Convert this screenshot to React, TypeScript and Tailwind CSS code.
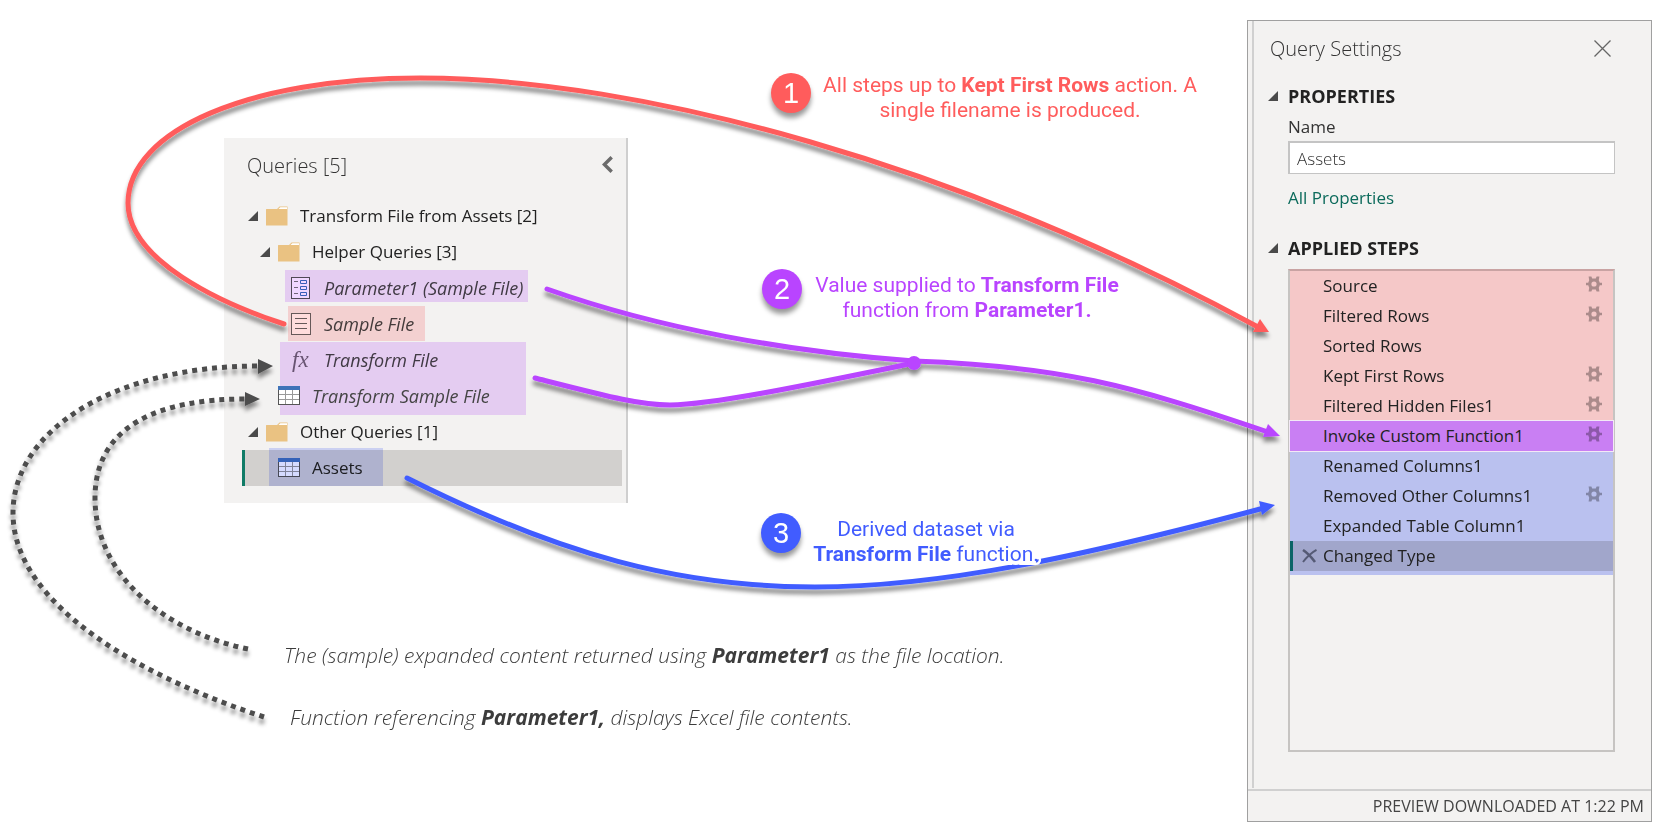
import React, { useState } from "react";
import clsx from "clsx";

type IconKind = "folder" | "parameter" | "text" | "fx" | "table";

interface QueryRow {
  label: string;
  level: number;
  icon: IconKind;
  group?: boolean;
  italic?: boolean;
  selected?: boolean;
  mark?: string;
}

const indents = ["pl-[3px]", "pl-[15px]", "pl-[27px]"];

const rows: QueryRow[] = [
  { label: "Transform File from Assets [2]", level: 0, icon: "folder", group: true },
  { label: "Helper Queries [3]", level: 1, icon: "folder", group: true },
  {
    label: "Parameter1 (Sample File)",
    level: 2,
    icon: "parameter",
    italic: true,
    mark: "left-[40px] top-0 h-8 w-[243px] bg-[#f0d7ff]",
  },
  {
    label: "Sample File",
    level: 2,
    icon: "text",
    italic: true,
    mark: "left-[43px] top-0 h-[35px] w-[137px] bg-[#ffdcdc]",
  },
  {
    label: "Transform File",
    level: 2,
    icon: "fx",
    italic: true,
    mark: "left-[35px] top-0 h-[73px] w-[246px] bg-[#f0d7ff]",
  },
  { label: "Transform Sample File", level: 1, icon: "table", italic: true },
  { label: "Other Queries [1]", level: 0, icon: "folder", group: true },
  {
    label: "Assets",
    level: 1,
    icon: "table",
    selected: true,
    mark: "left-[24px] -top-0.5 h-[38px] w-[114px] bg-[#d5dbff]",
  },
];

interface Step {
  label: string;
  gear?: boolean;
  tone: string;
  current?: boolean;
}

const pink = "bg-[#f5c8c8]";
const blue = "bg-[#bac1ef]";

const steps: Step[] = [
  { label: "Source", gear: true, tone: pink },
  { label: "Filtered Rows", gear: true, tone: pink },
  { label: "Sorted Rows", tone: pink },
  { label: "Kept First Rows", gear: true, tone: pink },
  { label: "Filtered Hidden Files1", gear: true, tone: pink },
  { label: "Invoke Custom Function1", gear: true, tone: "bg-[#c97ff3] outline outline-1 outline-[#f3e9f6] relative" },
  { label: "Renamed Columns1", tone: blue },
  { label: "Removed Other Columns1", gear: true, tone: blue },
  { label: "Expanded Table Column1", tone: blue },
  { label: "Changed Type", current: true, tone: "bg-[#a1a6cb]" },
];

function Triangle() {
  return (
    <svg width="10" height="10" viewBox="0 0 10 10" aria-hidden="true">
      <path d="M10 0V10H0Z" fill="#4a4a4a" />
    </svg>
  );
}

function Icon({ kind }: { kind: IconKind }) {
  if (kind === "folder") {
    return (
      <svg width="22" height="20" viewBox="0 0 22 20" aria-hidden="true">
        <path d="M0 3.5Q0 3 .5 3H11L13.5 .5H21.5V19.5H0Z" fill="#eac282" />
        <path d="M12.5 3L14.3 1.3H21V3Z" fill="#fff" />
      </svg>
    );
  }
  if (kind === "parameter") {
    return (
      <svg width="22" height="22" viewBox="0 0 22 22" fill="none" aria-hidden="true">
        <rect x="1.5" y=".5" width="18" height="21" fill="#fff" stroke="#555" />
        <path d="M4 4.5H8M4 10.5H8M4 16.5H8" stroke="#777" />
        <path d="M10.5 3.5H16.5V6.5H10.5ZM10.5 9.5H16.5V12.5H10.5ZM10.5 15.5H16.5V18.5H10.5Z" stroke="#3b6fb8" />
      </svg>
    );
  }
  if (kind === "text") {
    return (
      <svg width="22" height="22" viewBox="0 0 22 22" fill="none" aria-hidden="true">
        <rect x="1.5" y=".5" width="19" height="21" fill="#fff" stroke="#666" />
        <path d="M5 5.5H17M5 10.5H17M5 15.5H17" stroke="#666" />
      </svg>
    );
  }
  if (kind === "fx") {
    return (
      <span
        aria-hidden="true"
        className="w-[22px] pl-0.5 font-['Liberation_Serif',serif] text-[23px] leading-6 text-[#6e6472] italic"
      >
        fx
      </span>
    );
  }
  return (
    <svg width="22" height="20" viewBox="0 0 22 20" fill="none" aria-hidden="true">
      <rect x=".5" y="1.5" width="21" height="17" fill="#fff" stroke="#555" />
      <path d="M7.5 4V18M14.5 4V18M1 8.5H21M1 13.5H21" stroke="#999" />
      <path d="M0 0H22V4H0Z" fill="#3f72b8" />
    </svg>
  );
}

function Gear() {
  return (
    <svg width="16" height="16" viewBox="0 0 16 16" fill="currentColor" aria-hidden="true">
      <path
        fillRule="evenodd"
        d="M2.6 .6H5.4L6.2 2.6H9.8L10.6 .6H13.4L12.8 4.2L13.8 6.8H16V9.2H13.8L12.8 11.8L13.4 15.4H10.6L9.8 13.4H6.2L5.4 15.4H2.6L3.2 11.8L2.2 9.2H0V6.8H2.2L3.2 4.2ZM8 5.4A2.6 2.6 0 1 0 8 10.6A2.6 2.6 0 1 0 8 5.4Z"
      />
    </svg>
  );
}

function QueriesPanel() {
  return (
    <nav aria-label="Queries" className="mt-[138px] ml-[224px] w-[404px] shrink-0 self-start border-r-2 border-[#cfcfcf] bg-[#f3f2f1] pb-[17px]">
      <header className="flex h-[60px] items-start justify-between pt-[14px] pr-[13px] pl-[23px]">
        <h2 className="text-xl leading-7 font-light text-[#333]">Queries [5]</h2>
        <button type="button" aria-label="Collapse queries" className="pt-1">
          <svg width="11" height="17" viewBox="0 0 11 17" fill="none" aria-hidden="true">
            <path d="M9.7 1.2L2.4 8.5L9.7 15.8" stroke="#6b6b6b" strokeWidth="3.4" />
          </svg>
        </button>
      </header>
      <ul className="pr-1 pl-[18px]">
        {rows.map((row) => (
          <li
            key={row.label}
            className={clsx(
              "relative flex h-9 items-center border-l-[3px]",
              indents[row.level],
              row.selected ? "border-[#0f7b66] bg-[#d2d0ce]" : "border-transparent",
            )}
          >
            <span className="mr-2 w-2.5">{row.group && <Triangle />}</span>
            <Icon kind={row.icon} />
            <span
              className={clsx(
                "ml-3 whitespace-nowrap",
                row.italic ? "text-lg leading-6 text-[#444] italic" : "text-[17px] leading-6 text-[#222]",
              )}
            >
              {row.label}
            </span>
            {row.mark && <span aria-hidden="true" className={clsx("absolute mix-blend-multiply", row.mark)} />}
          </li>
        ))}
      </ul>
    </nav>
  );
}

function Callout({
  number,
  tone,
  badge,
  className,
  children,
}: {
  number: number;
  tone: string;
  badge: string;
  className: string;
  children: React.ReactNode;
}) {
  return (
    <div className={clsx("flex items-start whitespace-nowrap", className, tone)}>
      <span
        className={clsx(
          "flex size-10 shrink-0 items-center justify-center rounded-full font-['Liberation_Sans',sans-serif] text-[29px] leading-none text-white shadow-[0_5px_5px_rgba(0,0,0,0.4)]",
          badge,
        )}
      >
        {number}
      </span>
      {children}
    </div>
  );
}

function QuerySettings() {
  const [name, setName] = useState("Assets");
  return (
    <aside className="mt-5 mr-[9px] w-[405px] shrink-0 self-start border border-[#a0a0a0] bg-[#f3f2f1]">
      <div className="mb-px ml-1 border-l-2 border-[#d0d0d0] pr-9 pb-9 pl-[14px]">
        <header className="flex items-start justify-between pt-[14px] pr-1">
          <h2 className="pl-0.5 text-xl leading-7 font-light text-[#333]">Query Settings</h2>
          <button type="button" aria-label="Close" className="pt-[5px]">
            <svg width="17" height="17" viewBox="0 0 17 17" stroke="#666" strokeWidth="1.3" aria-hidden="true">
              <path d="M.5 .5L16.5 16.5M16.5 .5L.5 16.5" />
            </svg>
          </button>
        </header>
        <section>
          <h3 className="mt-[21px] flex items-center text-lg leading-6 font-bold text-[#222]">
            <span className="w-5"><Triangle /></span>
            PROPERTIES
          </h3>
          <div className="flex flex-col items-start pl-5">
            <label htmlFor="query-name" className="mt-[7px] text-[17px] leading-6 text-[#333]">Name</label>
            <input
              id="query-name"
              value={name}
              onChange={(event) => setName(event.target.value)}
              className="mt-0.5 h-[33px] w-full border border-t-2 border-l-2 border-[#c4c4c4] bg-white px-[7px] text-[17px] font-light text-[#333] outline-none"
            />
            <a href="#all" className="mt-3 text-[17px] leading-6 text-[#0b6a5b]">All Properties</a>
          </div>
        </section>
        <section>
          <h3 className="mt-[26px] flex items-center text-lg leading-6 font-bold text-[#222]">
            <span className="w-5"><Triangle /></span>
            APPLIED STEPS
          </h3>
          <ol className="mt-[9px] ml-5 min-h-[483px] border-2 border-[#c6c4c2] border-t-[#c9a3a3]">
            {steps.map((step) => (
              <li
                key={step.label}
                className={clsx(
                  "flex h-[30px] items-center border-l-[3px] pr-[11px] text-[17px] text-[#222]",
                  step.tone,
                  step.current ? "border-[#0b6466]" : "border-transparent",
                )}
              >
                <span className="flex w-[30px] justify-end pr-1.5">
                  {step.current && (
                    <button type="button" aria-label="Delete step">
                      <svg width="15" height="14" viewBox="0 0 15 14" fill="none" stroke="#555a75" aria-hidden="true">
                        <path d="M1 1Q7 5 13 13" strokeWidth="2.6" />
                        <path d="M14.5 .8Q7 5 1 13" strokeWidth="1.9" />
                      </svg>
                    </button>
                  )}
                </span>
                <span className="flex-1">{step.label}</span>
                {step.gear && (
                  <button type="button" aria-label={`Edit ${step.label}`} className="pb-1 text-black/30">
                    <Gear />
                  </button>
                )}
              </li>
            ))}
            <li aria-hidden="true" className="h-1 bg-[#bac1ef]" />
          </ol>
        </section>
      </div>
      <footer className="border-t-2 border-[#d0d0d0] pr-[7px] text-right text-base leading-[30px] text-[#444]">
        PREVIEW DOWNLOADED AT 1:22 PM
      </footer>
    </aside>
  );
}

function Connectors() {
  return (
    <svg
      viewBox="0 0 1661 831"
      preserveAspectRatio="none"
      fill="none"
      aria-hidden="true"
      className="pointer-events-none absolute inset-0 h-full w-full"
    >
      <defs>
        <filter id="drop" filterUnits="userSpaceOnUse" x="0" y="0" width="1661" height="831">
          <feDropShadow dx="0" dy="5" stdDeviation="2.2" floodColor="#000" floodOpacity="0.45" />
        </filter>
      </defs>
      <g strokeWidth="5" strokeLinecap="round">
        <g filter="url(#drop)">
          <path d="M284 324C220 303 128 260 128 203C128 130 250 78 420 78C640 78 960 165 1258 327" stroke="#ff5c5c" />
          <path d="M1269 332L1253 332L1260 319Z" fill="#ff5c5c" />
        </g>
        <g filter="url(#drop)">
          <path d="M547 289C660 329 790 352 914 361C1060 366 1130 385 1268 432" stroke="#b944ff" />
          <path d="M535 378C610 397 640 405 670 405C720 404 830 380 914 363" stroke="#b944ff" />
          <circle cx="914" cy="363" r="7" fill="#b944ff" />
          <path d="M1280 436L1263 437L1268 424Z" fill="#b944ff" />
        </g>
        <g filter="url(#drop)">
          <path d="M407 478C560 555 680 587 815 587C940 587 1080 557 1264 508" stroke="#415cff" />
          <path d="M1275 505L1259 501L1262 515Z" fill="#415cff" />
        </g>
      </g>
      <g stroke="#4d4d4d" strokeWidth="5" filter="url(#drop)">
        <path d="M264 717C150 680 13 608 13 513C13 430 115 366 258 366" strokeDasharray="5 5" />
        <path d="M248 649C165 632 95 575 95 498C95 425 160 399 245 399" strokeDasharray="5 5" />
        <path d="M273 366L258 359V374ZM260 399L245 392V406Z" fill="#4d4d4d" stroke="none" />
      </g>
    </svg>
  );
}

export default function App() {
  return (
    <main className="relative flex min-h-screen overflow-hidden bg-white font-['Open_Sans','Noto_Sans',sans-serif]">
      <div className="min-w-0 flex-1">
        <div className="flex items-start">
          <QueriesPanel />
          <div className="relative z-10 pt-[73px] font-[Roboto,sans-serif] text-[21px] leading-[25px]">
            <Callout number={1} tone="text-[#ff5c5c]" badge="bg-[#ff5c5c]" className="pl-[143px]">
              <p className="ml-2 w-[382px] text-center">
                <span className="block">All steps up to <b>Kept First Rows</b> action. A</span>
                <span className="block">single filename is produced.</span>
              </p>
            </Callout>
            <Callout number={2} tone="text-[#b944ff]" badge="bg-[#b944ff]" className="mt-[146px] pl-[134px]">
              <p className="ml-2 w-[314px] pt-1 text-center">
                <span className="block">Value supplied to <b>Transform File</b></span>
                <span className="block">function from <b>Parameter1.</b></span>
              </p>
            </Callout>
            <Callout number={3} tone="text-[#415cff]" badge="bg-[#415cff]" className="mt-[190px] pl-[133px]">
              <p className="ml-2 w-[234px] pt-1 text-center [paint-order:stroke_fill] [-webkit-text-stroke:8px_white]">
                <span className="block">Derived dataset via</span>
                <span className="block"><b>Transform File</b> function.</span>
              </p>
            </Callout>
          </div>
        </div>
        <div className="mt-[74px] flex flex-col gap-[34px] pl-[284px] text-[21px] leading-7 font-light whitespace-nowrap text-[#3c3c3c] italic">
          <p>
            The (sample) expanded content returned using <b className="font-bold">Parameter1</b> as the file location.
          </p>
          <p className="pl-1.5">
            Function referencing <b className="font-bold">Parameter1,</b> displays Excel file contents.
          </p>
        </div>
      </div>
      <QuerySettings />
      <Connectors />
    </main>
  );
}
